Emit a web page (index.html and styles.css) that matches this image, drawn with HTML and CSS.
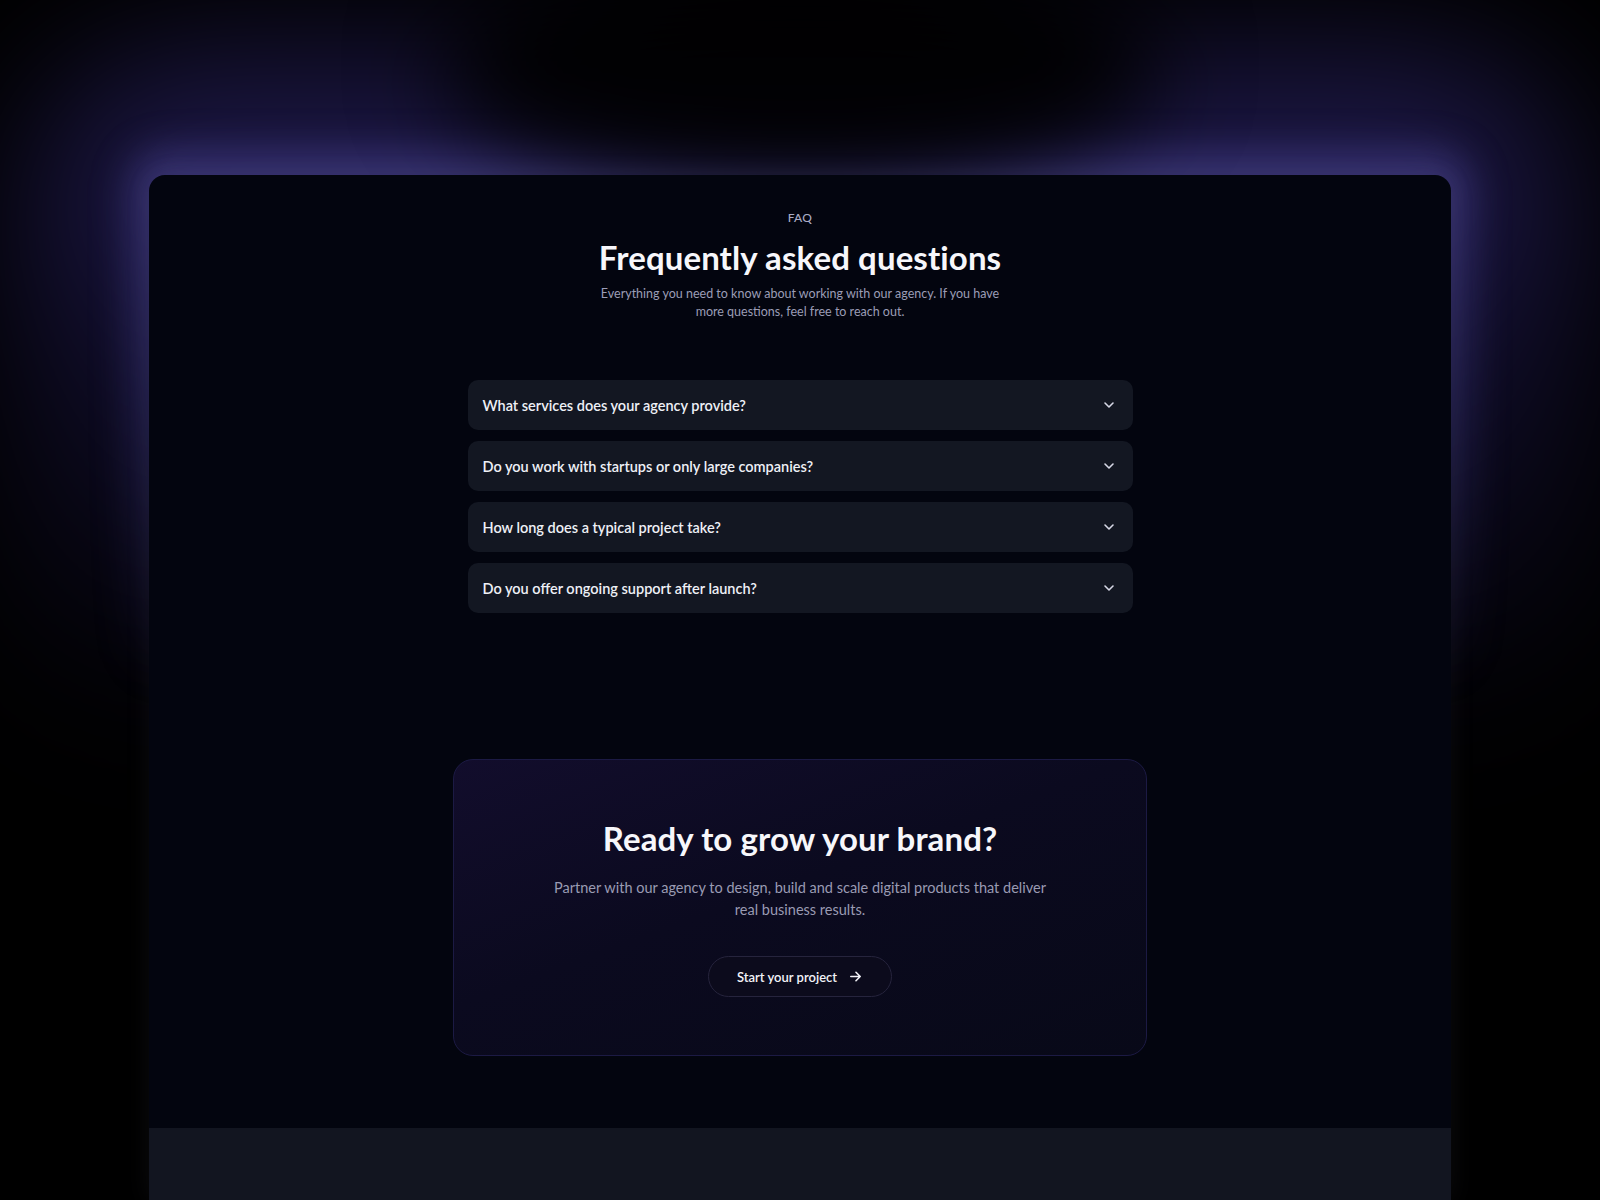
FILE: index.html
```html
<!DOCTYPE html>
<html lang="en">
<head>
<meta charset="utf-8">
<title>FAQ</title>
<link rel="stylesheet" href="styles.css">
</head>
<body>
<div class="stage">
  <div class="glow"></div>
  <div class="rim"></div>
  <div class="shade"></div>
  <main class="card">
    <section class="faq">
      <div class="eyebrow">FAQ</div>
      <h2 class="title">Frequently asked questions</h2>
      <p class="lead">Everything you need to know about working with our agency. If you have<br>more questions, feel free to reach out.</p>
      <div class="faq-list">
        <div class="faq-item"><span>What services does your agency provide?</span><svg class="chev" viewBox="0 0 16 16"><path d="M4 6l4 4 4-4"/></svg></div>
        <div class="faq-item"><span>Do you work with startups or only large companies?</span><svg class="chev" viewBox="0 0 16 16"><path d="M4 6l4 4 4-4"/></svg></div>
        <div class="faq-item"><span>How long does a typical project take?</span><svg class="chev" viewBox="0 0 16 16"><path d="M4 6l4 4 4-4"/></svg></div>
        <div class="faq-item"><span>Do you offer ongoing support after launch?</span><svg class="chev" viewBox="0 0 16 16"><path d="M4 6l4 4 4-4"/></svg></div>
      </div>
    </section>
    <section class="cta">
      <h2 class="cta-title">Ready to grow your brand?</h2>
      <p class="cta-text">Partner with our agency to design, build and scale digital products that deliver<br>real business results.</p>
      <a class="cta-btn" href="#">Start your project<svg class="arrow" viewBox="0 0 16 16"><path d="M3 8h10M8.5 3.5L13 8l-4.5 4.5"/></svg></a>
    </section>
    <footer class="foot"></footer>
  </main>
</div>
</body>
</html>
```

FILE: styles.css
```css
* { box-sizing: border-box; }
html, body { margin: 0; padding: 0; }
body {
  background: #000;
  font-family: "Lato", "Liberation Sans", sans-serif;
  color: #fff;
  height: 1200px;
  overflow: hidden;
}
.stage {
  position: relative;
  height: 1200px;
  padding-top: 175px;
}
.glow {
  position: absolute;
  left: 20px;
  right: 20px;
  top: 60px;
  height: 680px;
  border-radius: 160px;
  background: linear-gradient(to bottom, rgba(58, 48, 140, 0.6) 0%, rgba(42, 34, 110, 0.4) 40%, rgba(25, 20, 70, 0) 100%);
  filter: blur(75px);
}
.rim {
  position: absolute;
  left: 128px;
  right: 128px;
  top: 150px;
  height: 540px;
  border-radius: 40px;
  background: linear-gradient(to bottom, rgba(82, 76, 160, 0.5) 0%, rgba(66, 62, 140, 0.36) 45%, rgba(40, 38, 80, 0) 100%);
  filter: blur(18px);
}
.shade {
  position: absolute;
  left: 440px;
  width: 720px;
  top: -60px;
  height: 250px;
  border-radius: 50%;
  background: rgba(0, 0, 0, 0.92);
  filter: blur(45px);
}
.card {
  position: relative;
  width: 1302px;
  margin: 0 auto;
  height: 1025px;
  background: #03050f;
  border-radius: 16px 16px 0 0;
  box-shadow: 0 0 26px rgba(120, 120, 140, 0.11);
  display: flex;
  flex-direction: column;
  overflow: hidden;
}
.faq {
  padding-top: 35px;
  text-align: center;
  display: flex;
  flex-direction: column;
  align-items: center;
}
.eyebrow {
  font-size: 12px;
  line-height: 16px;
  color: #a9abc4;
  font-weight: 500;
  letter-spacing: 0.3px;
}
.title {
  margin: 11px 0 0;
  font-size: 33px;
  line-height: 40px;
  font-weight: 700;
  color: #f7f7fb;
  letter-spacing: 0.1px;
}
.lead {
  margin: 8px 0 0;
  font-size: 12.5px;
  line-height: 18px;
  color: #9b9db6;
}
.faq-list {
  margin-top: 59px;
  width: 665px;
  display: flex;
  flex-direction: column;
  gap: 11px;
}
.faq-item {
  height: 50px;
  background: #131722;
  border-radius: 10px;
  display: flex;
  align-items: center;
  justify-content: space-between;
  padding: 0 16px 0 15px;
  font-size: 14.5px;
  font-weight: 600;
  color: #eef0f6;
  text-align: left;
}
.chev {
  width: 16px;
  height: 16px;
  fill: none;
  stroke: #d7d8e6;
  stroke-width: 1.6;
  stroke-linecap: round;
  stroke-linejoin: round;
}
.cta {
  margin: 146px auto 0;
  width: 694px;
  height: 297px;
  border: 1px solid #1c1a44;
  border-radius: 20px;
  background: linear-gradient(160deg, #120d2c 0%, #0b0a1f 45%, #080918 100%);
  padding-top: 58px;
  display: flex;
  flex-direction: column;
  align-items: center;
  text-align: center;
}
.cta-title {
  margin: 0;
  font-size: 33px;
  line-height: 40px;
  font-weight: 700;
  color: #f7f7fb;
  letter-spacing: 0.1px;
}
.cta-text {
  margin: 19px 0 0;
  font-size: 14.5px;
  line-height: 22px;
  color: #9a9bb3;
}
.cta-btn {
  margin-top: 35px;
  width: 184px;
  height: 41px;
  border-radius: 21px;
  border: 1px solid #26243d;
  background: #0c0b1c;
  display: flex;
  align-items: center;
  justify-content: center;
  gap: 11px;
  color: #f2f2f7;
  text-decoration: none;
  font-size: 13px;
  font-weight: 600;
}
.arrow {
  width: 15px;
  height: 15px;
  fill: none;
  stroke: #f2f2f7;
  stroke-width: 1.7;
  stroke-linecap: round;
  stroke-linejoin: round;
}
.foot {
  margin-top: 72px;
  flex: 1;
  background: #121520;
}
```
